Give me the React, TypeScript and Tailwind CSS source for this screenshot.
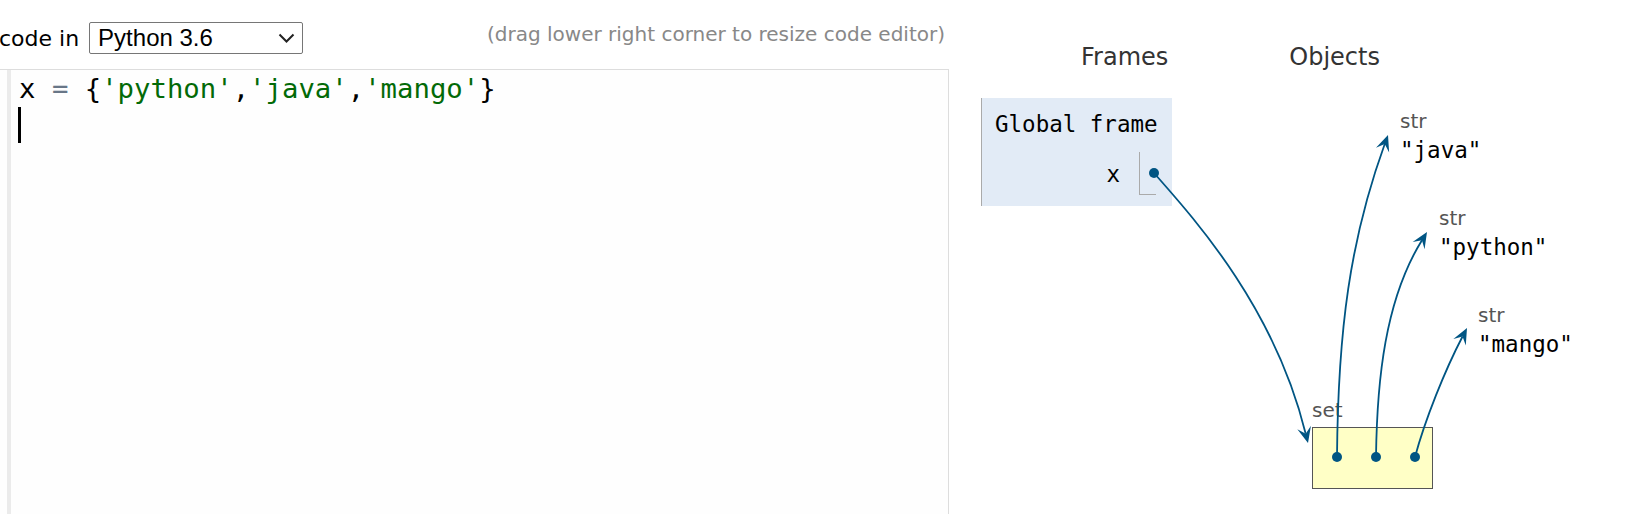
import React from "react";

const BLUE = "#005583";

type Pt = [number, number];

// cubic bezier + arrowhead at the end, in page coordinates
function Arrow({ p0, c1, c2, p3 }: { p0: Pt; c1: Pt; c2: Pt; p3: Pt }) {
  const dx = p3[0] - c2[0];
  const dy = p3[1] - c2[1];
  const len = Math.hypot(dx, dy) || 1;
  const ux = dx / len;
  const uy = dy / len;
  const nx = -uy;
  const ny = ux;
  const L = 16;
  const W = 7;
  const bx = p3[0] - ux * L;
  const by = p3[1] - uy * L;
  const notchX = p3[0] - ux * L * 0.6;
  const notchY = p3[1] - uy * L * 0.6;
  const head = [
    [p3[0], p3[1]],
    [bx + nx * W, by + ny * W],
    [notchX, notchY],
    [bx - nx * W, by - ny * W],
  ]
    .map(p => p.join(","))
    .join(" ");
  return (
    <g>
      <path
        d={`M${p0[0]} ${p0[1]} C${c1[0]} ${c1[1]} ${c2[0]} ${c2[1]} ${notchX} ${notchY}`}
        fill="none"
        stroke={BLUE}
        strokeWidth={1.8}
      />
      <polygon points={head} fill={BLUE} />
      <circle cx={p0[0]} cy={p0[1]} r={5} fill={BLUE} />
    </g>
  );
}

function StrObject({ value, className }: { value: string; className: string }) {
  return (
    <div className={`absolute ${className}`}>
      <div className="font-['DejaVu_Sans',sans-serif] text-[20px] leading-[24px] text-[#555]">str</div>
      <div className="mt-[3px] whitespace-pre font-['DejaVu_Sans_Mono',monospace] text-[22.5px] leading-[28px] text-black">
        "{value}"
      </div>
    </div>
  );
}

export default function App() {
  return (
    <div className="relative flex h-[514px] w-[1633px] overflow-hidden bg-white">
      {/* editor column */}
      <div className="flex w-[949px] flex-col">
        <div className="flex h-[69px] items-start pt-[21px]">
          <div className="flex items-center">
            <span className="-ml-[1px] pt-[2px] font-['DejaVu_Sans',sans-serif] text-[22px] leading-[32px] text-black">
              code in
            </span>
            <div className="ml-[10px] flex h-[32px] w-[214px] items-center justify-between rounded-[2px] border border-[#767676] bg-white pl-[8px] pr-[7px]">
              <span className="font-['Liberation_Sans',Arial,sans-serif] text-[24px] leading-none text-black">Python 3.6</span>
              <svg width="17" height="10" viewBox="0 0 17 10">
                <path d="M1.5 1.5 L8.5 8.5 L15.5 1.5" fill="none" stroke="#222" strokeWidth="2" />
              </svg>
            </div>
          </div>
          <span className="ml-auto pr-[4px] font-['DejaVu_Sans',sans-serif] text-[20px] leading-[26px] text-[#888]">
            (drag lower right corner to resize code editor)
          </span>
        </div>
        <div className="flex flex-1 border-t border-r border-[#dddddd] bg-[#fefefe]">
          <div className="ml-[7px] w-[4px] bg-[#ebebeb]" />
          <div className="pl-[8px] pt-[1px] font-['DejaVu_Sans_Mono',monospace] text-[27.3px] leading-[36px]">
            <div className="whitespace-pre">
              <span className="text-black">x </span>
              <span className="text-[#687687]">=</span>
              <span className="text-black"> {"{"}</span>
              <span className="text-[#036A07]">'python'</span>
              <span className="text-black">,</span>
              <span className="text-[#036A07]">'java'</span>
              <span className="text-black">,</span>
              <span className="text-[#036A07]">'mango'</span>
              <span className="text-black">{"}"}</span>
            </div>
            <div className="-ml-[1px] h-[36px] w-[3px] bg-black" />
          </div>
        </div>
      </div>

      {/* visualizer */}
      <div className="relative flex-1">
        <div className="mt-[43px] flex pl-[132px] font-['DejaVu_Sans',sans-serif] text-[24px] leading-[28px] text-[#333]">
          <span>Frames</span>
          <span className="ml-[121px]">Objects</span>
        </div>
        <div className="ml-[32px] mt-[27px] w-[191px] border-l border-[#aaaaaa] bg-[#e2ebf6] pb-[11px] pl-[13px] pr-[16px] pt-[12px] font-['DejaVu_Sans_Mono',monospace] text-[22.5px] leading-[28px] text-black">
          <div className="whitespace-nowrap">Global frame</div>
          <div className="mt-[14px] flex items-center justify-end">
            <span className="mr-[19px]">x</span>
            <div className="h-[43px] w-[17px] border-b border-l border-[#aaaaaa]" />
          </div>
        </div>

        <StrObject value="java" className="left-[451px] top-[109px]" />
        <StrObject value="python" className="left-[490px] top-[206px]" />
        <StrObject value="mango" className="left-[529px] top-[303px]" />

        <div className="absolute left-[363px] top-[398px]">
          <div className="font-['DejaVu_Sans',sans-serif] text-[20px] leading-[24px] text-[#555]">set</div>
          <div className="mt-[5px] h-[62px] w-[121px] border border-[#555] bg-[#ffffc6]" />
        </div>
      </div>

      <svg className="pointer-events-none absolute left-0 top-0" width={1633} height={514}>
        <Arrow p0={[1154, 173]} c1={[1200, 225]} c2={[1275, 310]} p3={[1308, 443]} />
        <Arrow p0={[1337, 457]} c1={[1338, 330]} c2={[1350, 240]} p3={[1388, 135]} />
        <Arrow p0={[1376, 457]} c1={[1377, 380]} c2={[1385, 300]} p3={[1427, 232]} />
        <Arrow p0={[1415, 457]} c1={[1425, 420]} c2={[1445, 370]} p3={[1467, 328]} />
      </svg>
    </div>
  );
}
